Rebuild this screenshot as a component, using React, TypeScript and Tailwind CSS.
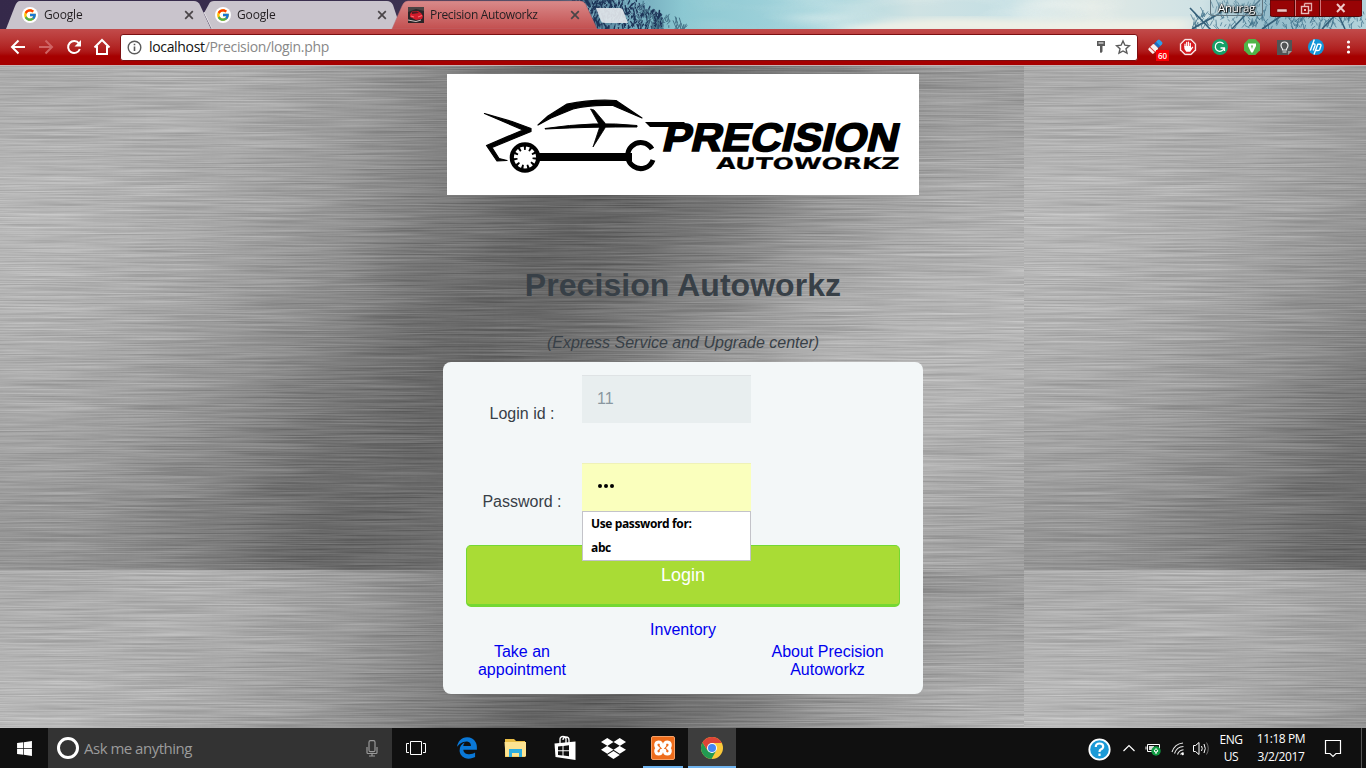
import React from 'react';
import { FcGoogle } from 'react-icons/fc';
import { FaDropbox, FaWindows } from 'react-icons/fa';
import { FaEdgeLegacy } from 'react-icons/fa6';

function seeded(seed: number) {
  let s = seed;
  return () => {
    s = (s * 16807) % 2147483647;
    return s / 2147483647;
  };
}

function branches(seed: number, x0: number, x1: number, count: number, minTop: (x: number) => number) {
  const r = seeded(seed);
  let d = '';
  for (let i = 0; i < count; i++) {
    const x = x0 + r() * (x1 - x0);
    const top = minTop(x);
    const y = top + r() * (32 - top);
    const dx = (r() - 0.5) * 9;
    const dy = -2 - r() * 6;
    d += `M${x.toFixed(1)} ${y.toFixed(1)}l${dx.toFixed(1)} ${dy.toFixed(1)}`;
  }
  return d;
}

const leftTrees = branches(77, 575, 662, 260, (x) => (x < 630 ? 0 : (x - 630) * 0.6));
const leftGlints = branches(391, 585, 655, 70, () => 2);
const lowTrees = branches(12, 640, 684, 70, (x) => 4 + (x - 640) * 0.5);
const rightTrees = branches(431, 1192, 1366, 330, (x) => (x < 1215 ? 20 - (x - 1192) * 0.7 : 2));

function Scenery() {
  return (
    <svg className="absolute inset-0 h-[29px] w-[1366px]" viewBox="0 0 1366 29">
      <defs>
        <linearGradient id="sky" x1="0" x2="1">
          <stop offset="0" stopColor="#35294a" />
          <stop offset="0.3" stopColor="#3c3150" />
          <stop offset="0.41" stopColor="#35506e" />
          <stop offset="0.46" stopColor="#6fa5b8" />
          <stop offset="0.5" stopColor="#8cc8d2" />
          <stop offset="0.6" stopColor="#a6d5dd" />
          <stop offset="0.67" stopColor="#cfe2e3" />
          <stop offset="0.74" stopColor="#c4dfe4" />
          <stop offset="0.8" stopColor="#e0e9e5" />
          <stop offset="0.88" stopColor="#cfe2e5" />
          <stop offset="0.93" stopColor="#94bccb" />
          <stop offset="1" stopColor="#b4d3da" />
        </linearGradient>
        <linearGradient id="cloudFade" x1="0" x2="1">
          <stop offset="0" stopColor="#000" />
          <stop offset="0.3" stopColor="#fff" />
          <stop offset="0.8" stopColor="#fff" />
          <stop offset="1" stopColor="#000" />
        </linearGradient>
        <mask id="cloudMask"><rect x="670" width="600" height="29" fill="url(#cloudFade)" /></mask>
        <filter id="cloud" x="0" y="0" width="1" height="1">
          <feTurbulence type="fractalNoise" baseFrequency="0.009 0.05" numOctaves="2" seed="4" />
          <feColorMatrix values="0 0 0 0 0.95  0 0 0 0 0.95  0 0 0 0 0.91  2 0 0 0 -0.8" />
        </filter>
        <filter id="haze"><feGaussianBlur stdDeviation="10 3" /></filter>
        <filter id="leafBlur"><feGaussianBlur stdDeviation="0.45" /></filter>
      </defs>
      <rect width="1366" height="29" fill="url(#sky)" />
      <g mask="url(#cloudMask)"><rect x="670" width="600" height="29" filter="url(#cloud)" opacity="0.6" /></g>
      <path d="M840 32Q900 14 1000 19T1190 18V32Z" fill="#eef0e6" filter="url(#haze)" />
      <g filter="url(#leafBlur)">
        <path d={leftTrees} stroke="#1e3458" strokeWidth="1.4" fill="none" />
        <path d={leftGlints} stroke="#83b7c8" strokeWidth="0.8" fill="none" />
        <path d={lowTrees} stroke="#47758a" strokeWidth="1" fill="none" />
        <path d={rightTrees} stroke="#3c6e87" strokeWidth="1" fill="none" opacity="0.7" />
        <path d="M1192 29L1222 12M1232 29L1252 8L1260 0M1262 29L1284 14M1322 29L1342 8M1345 29L1338 14L1325 4M1210 29L1190 8" stroke="#345f78" strokeWidth="1.6" fill="none" />
      </g>
    </svg>
  );
}

function TabShapes() {
  return (
    <svg className="absolute inset-0 h-[29px] w-[1366px]" viewBox="0 0 1366 29">
      <defs>
        <linearGradient id="activeTab" x1="0" y1="0" x2="0" y2="1">
          <stop offset="0" stopColor="#d98a8a" />
          <stop offset="1" stopColor="#c35050" />
        </linearGradient>
      </defs>
      <path d="M6 29L15 6Q17 1 20 1H194Q198 1 200 5L211 29Z" fill="#c9c4cc" />
      <path d="M204 13L209 4Q210 1 214 1H387Q391 1 393 5L401 29H212Z" fill="#c9c4cc" />
      <path d="M204 12L212 29" stroke="#e2dfe4" strokeWidth="1" />
      <path d="M392 29L402 6Q404 1 408 1H580Q584 1 586 5L597 29Z" fill="url(#activeTab)" stroke="#b46d74" strokeWidth="0.5" />
      <path d="M596 8H620Q622 8 623 10L628 23H605Q602 23 601 21Z" fill="#e2e6ea" opacity="0.92" />
    </svg>
  );
}

function CloseX() {
  return (
    <svg className="h-[10px] w-[10px]" viewBox="0 0 10 10">
      <path d="M1.2 1.2L8.8 8.8M8.8 1.2L1.2 8.8" stroke="#4a4548" strokeWidth="1.7" />
    </svg>
  );
}

function GoogleDot() {
  return (
    <span className="flex h-4 w-4 items-center justify-center rounded-full bg-white">
      <FcGoogle className="h-[14px] w-[14px]" />
    </span>
  );
}

function CarFavicon() {
  return (
    <svg className="h-4 w-4" viewBox="0 0 16 16">
      <rect width="16" height="16" fill="#2b2527" />
      <path d="M0 0H16V4L8 2L0 5Z" fill="#4a4343" />
      <path d="M2 7L4 4.500L10 4L13 6L15 9L14 12L8 13L2 10Z" fill="#d11c2b" />
      <path d="M4 5L9 4.500L11 6L4 7Z" fill="#511a22" />
      <path d="M3 9L6 10M10 10L14 8.5" stroke="#ff6a70" strokeWidth="1.2" />
      <path d="M0 13L8 14.500L13 13" stroke="#c9c0be" strokeWidth="1" fill="none" />
    </svg>
  );
}

function Tab({ icon, title, cls, textCls }: { icon: React.ReactNode; title: string; cls: string; textCls: string }) {
  return (
    <div className={`flex h-[29px] shrink-0 items-center ${cls}`}>
      {icon}
      <span className={`ml-[6px] flex-1 whitespace-nowrap text-[12px] leading-[16px] text-[#231f22] ${textCls}`}>{title}</span>
      <CloseX />
    </div>
  );
}

function TitleBar() {
  return (
    <div className="relative h-[29px] w-full overflow-hidden">
      <Scenery />
      <TabShapes />
      <div className="relative flex h-[29px]">
        <Tab icon={<GoogleDot />} title="Google" cls="ml-[22px] w-[172px]" textCls="tracking-[-0.15px]" />
        <Tab icon={<GoogleDot />} title="Google" cls="ml-[21px] w-[172px]" textCls="tracking-[-0.15px]" />
        <Tab icon={<CarFavicon />} title="Precision Autoworkz" cls="ml-[21px] w-[172px]" textCls="tracking-[-0.34px]" />
        <div className="ml-auto mr-1 flex h-[17px]">
          <div className="mr-[7px] flex h-4 w-[53px] items-center justify-center rounded-b-[3px] border border-t-0 border-[#61757f] bg-[#a7c3cc]/30 pt-px text-[11.5px] leading-4 tracking-[-0.3px] text-white [text-shadow:0_0_2px_#000,0_0_1px_#000,1px_1px_1px_#000]">
            Anurag
          </div>
          <svg className="h-[17px] w-[92px]" viewBox="0 0 92 17">
            <path d="M0 0H92V14Q92 16.500 89.500 16.500H2.500Q0 16.500 0 14Z" fill="#980305" stroke="#4f0708" />
            <path d="M25.500 0V16M50.500 0V16" stroke="#d07578" />
            <path d="M24.500 0V16M49.500 0V16" stroke="#560304" />
            <rect x="7" y="9" width="10" height="3" rx="0.500" fill="#efc3c3" stroke="#5d1012" strokeWidth="0.500" />
            <path d="M34.500 3.500H41.500V10.500H39M34.500 3.500V6" stroke="#e3acac" fill="none" strokeWidth="1.300" />
            <rect x="31.500" y="6.500" width="7" height="7" fill="#980305" stroke="#e9bcbc" strokeWidth="1.400" />
            <rect x="34" y="9" width="2" height="2" fill="#e9bcbc" />
            <path d="M67 4L74.500 12M74.500 4L67 12" stroke="#efc9c9" strokeWidth="2" />
          </svg>
        </div>
      </div>
    </div>
  );
}

function Toolbar() {
  return (
    <div className="flex h-9 w-full items-center bg-gradient-to-b from-[#c24b4b] via-[#af1b1b] via-60% to-[#a60000] to-75%">
      <svg className="h-9 w-[120px] shrink-0" viewBox="0 29 120 36" fill="none" stroke="#fff" strokeWidth="2">
        <path d="M25 47H12.500M18.500 40.500L12 47L18.500 53.500" />
        <path d="M39 47H51.500M45.500 40.500L52 47L45.500 53.500" stroke="#cf6464" />
        <path d="M79 43.500A6 6 0 1 0 79.800 49" />
        <path d="M81 40V46.500H74.500Z" fill="#fff" stroke="none" />
        <path d="M94.500 47.500L102 40L109.500 47.500M97 46V54H107V46" />
      </svg>
      <div className="flex h-[27px] w-[1018px] shrink-0 items-center rounded-[3px] border border-[#7c1012] bg-white">
        <svg className="ml-[6px] h-[15px] w-[15px]" viewBox="0 0 15 15" fill="none" stroke="#5a5a5a">
          <circle cx="7.500" cy="7.500" r="6.300" strokeWidth="1.400" />
          <path d="M7.500 6.500V11M7.500 3.700V5.200" strokeWidth="1.600" />
        </svg>
        <div className="ml-[7px] flex-1 text-[14px] leading-[20px] tracking-[-0.33px] text-[#888]">
          <span className="text-[#111]">localhost</span>/Precision/login.php
        </div>
        <svg className="mr-[5px] h-[25px] w-[38px]" viewBox="1094 35 38 25">
          <path d="M1097 41H1105V46H1102.500V51.500Q1101 54 1100 52V46H1097Z" fill="#5a5a5a" />
          <path d="M1098.500 43H1103.500" stroke="#fff" />
          <path d="M1123 41L1124.900 45.200L1129.400 45.700L1126 48.800L1127 53.200L1123 51L1119 53.200L1120 48.800L1116.600 45.700L1121.100 45.200Z" fill="none" stroke="#5a5a5a" strokeWidth="1.400" />
        </svg>
      </div>
      <svg className="h-9 w-[228px] shrink-0" viewBox="1138 29 228 36">
        <g transform="rotate(45 1156 46)">
          <rect x="1153" y="39" width="6" height="5" rx="1.500" fill="#2e9ee8" />
          <rect x="1153" y="43" width="6" height="3" fill="#1e6dbf" />
          <rect x="1152.500" y="46" width="7" height="8" rx="1" fill="#f6f0ee" />
          <path d="M1152.500 51H1159.500" stroke="#d33" />
        </g>
        <rect x="1156" y="50" width="13" height="11" fill="#fb0006" />
        <text x="1162.500" y="58.500" textAnchor="middle" fontSize="8" fontWeight="600" fontFamily="Open Sans, sans-serif" fill="#fff">60</text>
        <path d="M1184.700 39H1191.300L1196 43.700V50.300L1191.300 55H1184.700L1180 50.300V43.700Z" fill="#fff" stroke="#d8a0a0" strokeWidth="0.500" />
        <path d="M1185.200 40.200H1190.800L1194.800 44.200V49.800L1190.800 53.800H1185.200L1181.200 49.800V44.200Z" fill="#d61a1f" />
        <path d="M1185 47V44M1186.700 47V42.300M1188.500 47V42M1190.300 47.500V43.300" stroke="#fff" strokeWidth="1.200" strokeLinecap="round" />
        <path d="M1184.400 46H1191V48L1192.500 46.500L1193.300 47.300L1190.200 51.700H1186.300L1184.400 49Z" fill="#fff" />
        <circle cx="1220" cy="47" r="8" fill="#15a168" />
        <path d="M1223.500 43.800A4.600 4.600 0 1 0 1224.300 48H1220.500M1224.500 48V51" fill="none" stroke="#fff" strokeWidth="1.300" />
        <path d="M1248.700 39H1255.300L1260 43.700V50.300L1255.300 55H1248.700L1244 50.300V43.700Z" fill="#4fb548" />
        <path d="M1248 43.500H1256V46L1252.800 52.500H1251.200L1248 46Z" fill="#fff" />
        <path d="M1251 45.500H1253L1252 49Z" fill="#4fb548" />
        <path d="M1277 40H1292V51L1288 55H1277Z" fill="#515455" />
        <path d="M1288 55V51H1292Z" fill="#999" />
        <path d="M1282.500 49Q1281 47 1281 45.500A3.500 3.500 0 0 1 1288 45.500Q1288 47 1286.500 49V50H1282.500ZM1282.500 52H1286.500" fill="none" stroke="#eee" strokeWidth="1.200" />
        <circle cx="1316" cy="47" r="8" fill="#1295d8" />
        <path d="M1314.300 39.500L1310.300 50.500M1312.800 44.200Q1315.600 43 1314.900 45.700L1313.200 50.500M1317.800 44L1314 54.500M1317.500 44.200H1319.500Q1321.500 44 1320.800 46L1319.700 49.500Q1319.300 50.500 1318 50.500H1316" fill="none" stroke="#fff" strokeWidth="1.400" />
        <circle cx="1348.500" cy="42" r="1.600" fill="#fff" />
        <circle cx="1348.500" cy="47" r="1.600" fill="#fff" />
        <circle cx="1348.500" cy="52" r="1.600" fill="#fff" />
      </svg>
    </div>
  );
}

const GRAIN = 0.15;
const COL = 128;
const ROW = 84;
const shades = [
  [172, 180, 162, 134, 102, 106, 132, 158],
  [184, 172, 158, 126, 95, 112, 148, 176],
  [182, 168, 148, 110, 98, 132, 166, 182],
  [174, 158, 132, 98, 114, 150, 180, 182],
  [165, 146, 114, 100, 136, 165, 184, 174],
  [150, 130, 102, 110, 134, 162, 178, 162],
];

function shadeCells() {
  const cells: React.ReactNode[] = [];
  for (let r = -1; r <= shades.length; r++) {
    for (let c = -1; c <= shades[0].length; c++) {
      const row = shades[Math.min(Math.max(r, 0), shades.length - 1)];
      const v = row[Math.min(Math.max(c, 0), row.length - 1)];
      const g = Math.round((v - GRAIN * 128) / (1 - GRAIN));
      cells.push(<rect key={`${r}:${c}`} x={c * COL} y={r * ROW} width={COL + 1} height={ROW + 1} fill={`rgb(${g},${g},${g})`} />);
    }
  }
  return cells;
}

function BrushedMetal() {
  return (
    <svg className="absolute inset-0 h-[662px] w-[1366px]" viewBox="0 0 1366 662">
      <defs>
        <filter id="grain" x="0" y="0" width="1" height="1" colorInterpolationFilters="sRGB">
          <feTurbulence type="fractalNoise" baseFrequency="0.009 0.7" numOctaves="3" seed="9" />
          <feColorMatrix values="1.5 0 0 0 -0.25  1.5 0 0 0 -0.25  1.5 0 0 0 -0.25  0 0 0 0 1" />
        </filter>
        <filter id="blend" filterUnits="userSpaceOnUse" x="-128" y="-84" width="1280" height="672" colorInterpolationFilters="sRGB">
          <feGaussianBlur stdDeviation="52 36" />
        </filter>
        <clipPath id="tileClip"><rect width="1024" height="504" /></clipPath>
        <g id="tile" clipPath="url(#tileClip)">
          <rect width="1024" height="504" fill="#999" />
          <g filter="url(#blend)">{shadeCells()}</g>
          <rect width="1024" height="504" filter="url(#grain)" opacity={GRAIN} />
        </g>
      </defs>
      <use href="#tile" />
      <use href="#tile" x="1024" />
      <use href="#tile" y="504" />
      <use href="#tile" x="1024" y="504" />
    </svg>
  );
}

function Logo() {
  return (
    <svg className="h-[121px] w-[472px] bg-white" viewBox="447 74 472 121">
      <g fill="#000" stroke="#000" strokeLinejoin="round">
        <path d="M484.500 113.500L512 121.500L531 128.500V131.500L492 147.500L499 158.500L507 160.500L497 161L486.500 145.500L523 130Z" strokeWidth="1.200" />
        <path d="M538 133L548 124L567 112Q592 107 616 108.500L642 126L613 113.500Q590 112.500 573 117L551 126Z" transform="translate(0 -8)" strokeWidth="1.200" />
        <path d="M545 128.500Q595 121 637 125.500V127Q595 126.500 545 129Z" strokeWidth="1" />
        <path d="M590.500 109L594 110L605 123V128L593 147L600 126Z" strokeWidth="0.800" />
        <path d="M538 153H632V161H538Z" stroke="none" />
        <path d="M645 122H685L680 127H650Z" stroke="none" />
      </g>
      <g fill="none" stroke="#000">
        <circle cx="525" cy="157.500" r="13.200" strokeWidth="4.200" />
        <circle cx="525" cy="157.500" r="9.600" strokeWidth="4" strokeDasharray="2 3.480" />
        <path d="M652 149A13 13 0 1 0 653 160" strokeWidth="5" />
      </g>
      <g fill="#000" stroke="#000" strokeLinejoin="miter" fontWeight="700">
        <text transform="translate(661 151) skewX(-13)" fontFamily="Liberation Sans, Arial, sans-serif" fontSize="39.500" textLength="235" lengthAdjust="spacingAndGlyphs" strokeWidth="1.600">PRECISION</text>
        <text transform="translate(716 168.500) skewX(-6)" fontFamily="DejaVu Sans, sans-serif" fontSize="16" textLength="183" lengthAdjust="spacingAndGlyphs" strokeWidth="0.200">AUTOWORKZ</text>
      </g>
    </svg>
  );
}

function LoginCard() {
  return (
    <div className="h-[332px] w-[480px] rounded-[8px] bg-[#f3f7f8] px-[23px] pt-[13px] text-[16px] leading-[18px] text-[#384047]">
      <div className="flex h-[88px]">
        <div className="w-[116px] pt-[30px] pr-[4px] text-center">Login id :</div>
        <div className="flex h-12 w-[169px] items-center border-t border-[#dfe3e5] bg-[#e8eeef] px-[15px] pb-px text-[#8a97a0]">11</div>
      </div>
      <div className="flex h-[82px]">
        <div className="w-[116px] pt-[30px] pr-[4px] text-center">Password :</div>
        <div className="relative h-12 w-[169px] border-t border-[#eff2b8] bg-[#faffbd]">
          <div className="flex h-[44px] items-center gap-[2px] pl-4">
            <span className="h-1 w-1 rounded-full bg-black" />
            <span className="h-1 w-1 rounded-full bg-black" />
            <span className="h-1 w-1 rounded-full bg-black" />
          </div>
          <div className="absolute left-0 top-[47px] z-10 h-[50px] w-[169px] border border-[#c3c3c9] bg-white pl-2 font-['Open_Sans','Noto_Sans',sans-serif] text-[12px] leading-[24px] font-bold tracking-[-0.37px] text-black">
            <div>Use password for:</div>
            <div>abc</div>
          </div>
        </div>
      </div>
      <div className="flex h-[62px] w-[434px] items-center justify-center rounded-[5px] border border-b-[3px] border-[#74d833] bg-[#a9dc35] text-[18px] text-white">Login</div>
      <div className="pt-[14px] text-center text-[#0000ee]">Inventory</div>
      <div className="flex justify-between pt-1 text-center text-[#0000ee]">
        <div className="w-[112px]">Take an<br />appointment</div>
        <div className="w-[145px]">About Precision<br />Autoworkz</div>
      </div>
    </div>
  );
}

function ChromeIcon() {
  return (
    <svg className="h-[22px] w-[22px]" viewBox="0 0 22 22">
      <circle cx="11" cy="11" r="11" fill="#fbc93a" />
      <path d="M1.470 5.500A11 11 0 0 0 10.500 22L15.300 13.500L11 11L6.670 13.500Z" fill="#229a52" />
      <path d="M1.470 5.500A11 11 0 0 1 20.530 5.500L20.700 6H11L6.500 13.300Z" fill="#dd4437" />
      <circle cx="11" cy="11" r="5" fill="#fff" />
      <circle cx="11" cy="11" r="4" fill="#4486f4" />
    </svg>
  );
}

function XamppIcon() {
  return (
    <svg className="mt-[2px] h-6 w-6" viewBox="0 0 24 24">
      <rect x="0.500" y="0.500" width="23" height="23" rx="1.500" fill="#ee6c1b" stroke="#f5a066" />
      <g fill="none" stroke="#fff" strokeWidth="3.200" strokeLinecap="round" strokeLinejoin="round">
        <path d="M10.500 9Q10.500 6 7.500 6Q4.800 6.200 4.800 9Q5 11.500 7.200 12Q4.800 12.800 4.800 15.200Q5 18 7.500 18Q10.500 18 10.500 15" />
        <path d="M13.500 9Q13.500 6 16.500 6Q19.200 6.200 19.200 9Q19 11.500 16.800 12Q19.200 12.800 19.200 15.200Q19 18 16.500 18Q13.500 18 13.500 15" />
        <path d="M10 9.500L14 14.500M14 9.500L10 14.500" strokeWidth="2.600" />
      </g>
    </svg>
  );
}

function Taskbar() {
  return (
    <div className="flex h-10 w-full bg-[#101010] font-['Open_Sans','Noto_Sans',sans-serif] text-white">
      <div className="flex w-12 items-center justify-center"><FaWindows className="h-[17px] w-[17px]" /></div>
      <div className="flex w-[344px] items-center bg-[#333] pl-[9px] pr-3">
        <span className="h-[22px] w-[22px] rounded-full border-[3px] border-white" />
        <span className="ml-[5px] flex-1 text-[15px] tracking-[-0.5px] text-[#9b9b9b]">Ask me anything</span>
        <svg className="h-[17px] w-4" viewBox="0 0 16 17" fill="none" stroke="#999" strokeWidth="1.200">
          <rect x="5" y="0.700" width="6" height="11" rx="1.500" /><path d="M3 7V12.500Q3 13.500 4 13.500H12Q13 13.500 13 12.500V7M8 13.500V16M5 16H11" />
        </svg>
      </div>
      <div className="flex w-12 items-center justify-center">
        <svg className="h-4 w-[22px]" viewBox="0 0 22 16" fill="none" stroke="#fff"><path d="M5.500 1.500H16.500V14.500H5.500ZM4 3.500H1.500V12.500H4M18 3.500H20.500V12.500H18" /></svg>
      </div>
      <div className="flex w-[54px] items-center justify-center"><FaEdgeLegacy className="h-[22px] w-[22px] text-[#0a78d7]" /></div>
      <div className="flex w-[43px] items-center justify-center">
        <svg className="h-[20px] w-[23px]" viewBox="0 0 23 20">
          <path d="M1 1H10L12 3H21V19H1Z" fill="#e9bd45" /><path d="M0.500 4H22V18.500H1.500Z" fill="#fde391" />
          <path d="M5 11H18V19H15V15H8V19H5Z" fill="#2caee0" />
        </svg>
      </div>
      <div className="flex w-[55px] items-center justify-center">
        <svg className="h-[26px] w-[22px]" viewBox="0 0 22 26">
          <path d="M6 9V4Q6 1.500 9 1.500Q12 1.500 12 4V8M9 5Q9 2 12 2Q15 2 15 5V8" fill="none" stroke="#fff" strokeWidth="1.300" />
          <path d="M0.500 8.500L21.500 6.500V25L1.500 22Z" fill="#fff" />
          <path d="M4 11.500L8.500 11V15.300H4ZM9.500 10.900L15 10.300V15.300H9.500ZM4 16.300H8.500V20.500L4 20ZM9.500 16.300H15V21.200L9.500 20.600Z" fill="#101010" />
        </svg>
      </div>
      <div className="flex w-[43px] items-center justify-center"><FaDropbox className="h-[25px] w-[25px]" /></div>
      <div className="ml-2 flex w-10 items-center justify-center border-b-2 border-[#70b4ef]"><XamppIcon /></div>
      <div className="ml-[5px] flex w-12 items-center justify-center border-b-2 border-[#70b4ef] bg-[#3d3d3d]"><span className="mt-[2px]"><ChromeIcon /></span></div>
      <svg className="ml-auto h-10 w-[136px]" viewBox="1080 728 136 40" fill="none" stroke="#fff">
        <circle cx="1099.500" cy="749.500" r="10.200" fill="#1b9ad7" strokeWidth="1.800" />
        <path d="M1095.800 747Q1095.800 743.500 1099.500 743.500Q1103.200 743.500 1103.200 746.500Q1103.200 748.500 1100.800 749.500Q1099.500 750.200 1099.500 752M1099.500 753.500V756" strokeWidth="2.200" />
        <path d="M1123.500 751L1129 745.500L1134.500 751" strokeWidth="1.200" />
        <path d="M1147.500 744.500H1159.500V751.500H1147.500ZM1146 746.500V749.500" />
        <path d="M1149 746H1154V750H1149Z" fill="#ddd" stroke="none" />
        <circle cx="1156" cy="751" r="4.700" fill="#109a42" stroke="none" />
        <path d="M1154 751L1156 748.500L1158 751L1156 752.500ZM1156 751V754" strokeWidth="1" />
        <path d="M1172 752A13 13 0 0 1 1183 743M1174.500 753.500A10 10 0 0 1 1183.500 746.500M1177.500 754.500A7 7 0 0 1 1183.500 749.800M1180.500 754.500A4 4 0 0 1 1183.500 752.500" strokeWidth="1.100" opacity="0.900" />
        <circle cx="1182.700" cy="754" r="1.200" fill="#fff" stroke="none" />
        <path d="M1193.500 745.500H1195.500L1199 742.500V754.500L1195.500 751.500H1193.500ZM1201.500 746Q1203 748.500 1201.500 751M1204 744Q1206.500 748.500 1204 753" />
        <path d="M1206.500 742.500Q1210 748.500 1206.500 754.500" opacity="0.400" />
      </svg>
      <div className="w-[30px] pt-[3px] text-center text-[12px] leading-[17px] tracking-[-0.4px]">ENG<br />US</div>
      <div className="w-[70px] pt-[2px] text-center text-[12px] leading-[18px] tracking-[-0.4px]">11:18 PM<br />3/2/2017</div>
      <svg className="h-10 w-[50px]" viewBox="1316 728 50 40" fill="none" stroke="#fff">
        <path d="M1325.500 740.500H1340.500V753.500H1336L1333 756.500L1330 753.500H1325.500Z" strokeWidth="1.200" />
        <path d="M1361.500 728V768" stroke="#555" />
      </svg>
    </div>
  );
}

export default function App() {
  return (
    <div className="flex h-[768px] w-[1366px] flex-col overflow-hidden font-['Open_Sans','Noto_Sans',sans-serif]">
      <TitleBar />
      <Toolbar />
      <div className="h-px w-full bg-[#c9b5b5]" />
      <main className="relative h-[662px] w-full font-['Liberation_Sans',Arial,sans-serif]">
        <BrushedMetal />
        <div className="relative flex flex-col items-center pt-2 text-[#384047]">
          <Logo />
          <h1 className="mt-[71px] text-[32px] leading-[38px] font-bold tracking-[0.05px]">Precision Autoworkz</h1>
          <p className="mt-[30px] mb-[10px] text-[16px] leading-[18px] italic">(Express Service and Upgrade center)</p>
          <LoginCard />
        </div>
      </main>
      <Taskbar />
    </div>
  );
}
